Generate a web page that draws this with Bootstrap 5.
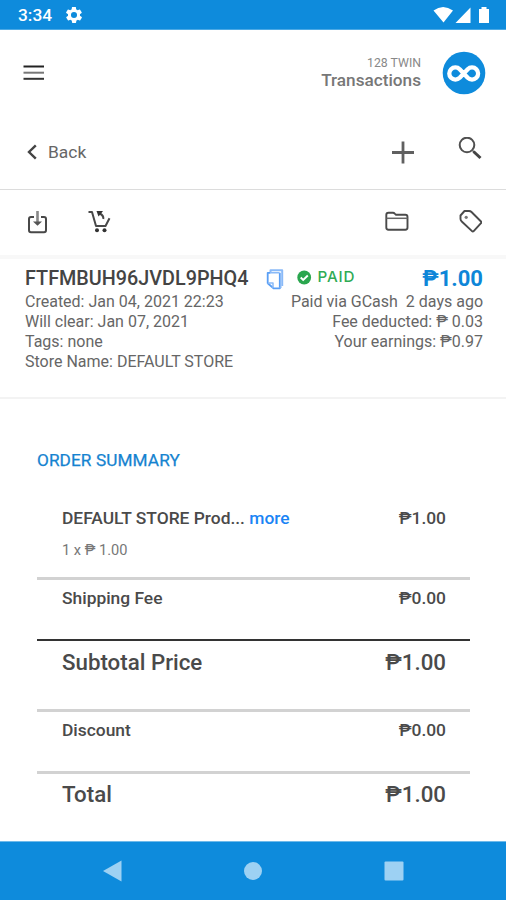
<!DOCTYPE html>
<html lang="en">
<head>
<meta charset="utf-8">
<meta name="viewport" content="width=device-width, initial-scale=1">
<title>Transactions</title>
<link href="https://cdn.jsdelivr.net/npm/bootstrap@5.3.0/dist/css/bootstrap.min.css" rel="stylesheet">
<style>
body{font-family:Roboto,"Liberation Sans",sans-serif;color:#666;background:#fff;height:900px;overflow:hidden;line-height:20px}
svg{display:block;flex:none}
.brand-bg{background:#0e8bdc}
.status{height:30px;padding:1px 15px 0 18px;color:#fff;font-size:17.3px;font-weight:500;border-bottom:1px solid #4ba9e5}
.gear{margin-left:14px}
.apphead{height:84px;padding:2px 20px 0 23px}
.store{font-size:12.3px;line-height:15px;color:#888}
.screen{font-size:17.2px;line-height:18px;color:#777;font-weight:500}
.titles{margin-bottom:2px}
.brandlogo{margin-left:21px}
.subbar{height:76px;padding:0 24px 0 27px;border-bottom:1px solid #dcdcdc}
.backlink{font-size:17.4px;color:#666;gap:11px}
.toolbar{height:65px;padding:0 24px 0 27px}
.detail{height:144px;padding:8px 23px 0 25px;border-top:4px solid #f8f8f8;border-bottom:2px solid #f3f3f3;font-size:16px;line-height:19.8px}
.headline{margin-bottom:1.4px}
.code{font-size:19.8px;line-height:24px;font-weight:500;color:#444}
.copy{margin-left:18px}
.check{margin:-4px 0 0 13px}
.paid{font-family:Inter,sans-serif;font-size:15.2px;line-height:20px;font-weight:500;color:#2fab54;letter-spacing:.9px;margin:-4px 0 0 5px}
.amount{font-size:22px;line-height:24px;font-weight:700;color:#0e86d8}
.summary{padding:51px 36px 0 37px;height:442px}
.summary h2{font-size:17.2px;line-height:20px;font-weight:400;color:#1583d0;-webkit-text-stroke:.25px #1583d0;margin:0;height:58px;letter-spacing:.1px}
.entry{height:62px;padding:8px 24px 0 25px;font-weight:500;font-size:17.4px;color:#4a4a4a}
.entry .more{color:#1a84f5}
.entry .qty{font-size:14.6px;font-weight:400;color:#777;margin-top:12px}
.entry.product{height:69px;padding-top:0}
.ruled{border-top:3px solid #d2d2d2}
.dark-rule{border-top:2px solid #333}
.entry.big{font-size:22.3px;height:70px;padding-top:11px}
.entry.big.ruled{padding-top:10px}
.navbtns{height:59px;border-top:1px solid #6fbaea;padding:0 102px 0 103px}
</style>
</head>
<body>
<header class="status brand-bg d-flex align-items-center">
  <span>3:34</span>
  <svg class="gear" width="16" height="16" viewBox="2 2 20 20" fill="#fff"><path d="M19.400 13c0-.3.1-.6.1-1s0-.7-.1-1l2.100-1.600c.2-.2.3-.4.1-.7l-2-3.400c-.1-.2-.4-.3-.6-.2l-2.500 1c-.5-.4-1.100-.7-1.700-1l-.4-2.600c0-.2-.2-.4-.5-.4h-4c-.2 0-.5.2-.5.4l-.4 2.600c-.6.3-1.200.6-1.700 1l-2.500-1c-.2-.1-.5 0-.6.2l-2 3.400c-.1.300-.1.500.1.700L4.600 11c-.1.300-.1.600-.1 1s0 .7.1 1l-2.100 1.600c-.2.2-.3.4-.1.7l2 3.400c.1.2.4.3.6.2l2.500-1c.5.4 1.100.7 1.700 1l.4 2.600c0 .2.200.4.500.4h4c.200 0 .500-.2.500-.4l.4-2.600c.6-.3 1.200-.6 1.700-1l2.500 1c.2.1.5 0 .6-.2l2-3.400c.1-.3.1-.5-.1-.7zM12 15.800A3.800 3.800 0 1 1 12 8.200a3.800 3.800 0 0 1 0 7.600z"/></svg>
  <svg class="ms-auto" width="58" height="18" viewBox="433 6 58 18" fill="#fff"><path d="M433.500 10.500Q443 3.500 453 10.500L443.500 22.500ZM455.500 23L470.500 7.500V23ZM479 9h2.500V7h5v2h2.500V23h-10Z"/></svg>
</header>
<section class="apphead d-flex align-items-center">
  <svg width="22" height="18" viewBox="0 0 22 18" stroke-width="2"><path stroke="#222" d="M.5 2.500H21"/><path stroke="#777" d="M.5 8.700H21"/><path stroke="#333" d="M.5 14.800H21"/></svg>
  <div class="titles ms-auto text-end"><div class="store">128 TWIN</div><div class="screen">Transactions</div></div>
  <svg class="brandlogo" width="44" height="44" viewBox="0 0 44 44"><circle cx="22" cy="22" r="21.300" fill="#0e8bdc"/><path d="M21.700 22.500L17.700 18.200A6.100 6.100 0 1 0 17.700 26.800L25.700 18.200A6.100 6.100 0 1 1 25.700 26.800Z" fill="none" stroke="#fff" stroke-width="4.300" stroke-linejoin="round"/></svg>
</section>
<nav class="subbar d-flex align-items-center">
  <div class="backlink d-flex align-items-center"><svg width="10" height="16" viewBox="0 0 10 16" fill="none" stroke="#444" stroke-width="2.400"><path d="M8.800 1.300L2 8l6.800 6.700"/></svg><span>Back</span></div>
  <svg class="ms-auto" width="99" height="30" viewBox="383 137 99 30" fill="none" stroke="#606060"><path stroke-width="2.800" d="M392 152.500h22M403 141.500v22"/><circle cx="467" cy="145" r="7.300" stroke="#505050" stroke-width="2"/><path stroke-width="1.500" d="M472 150l2 2"/><path stroke="#444" stroke-width="3" d="M473.500 151.500l7 6.500"/></svg>
</nav>
<nav class="toolbar d-flex align-items-center justify-content-between">
  <svg width="85" height="28" viewBox="27 208 85 28" fill="none" stroke="#484848" stroke-width="2" stroke-linejoin="round"><path d="M34 216h-3q-2 0-2 2v11q0 2.200 2 2.200h13q2 0 2-2.200v-11q0-2-2-2h-3"/><path stroke="#888" stroke-width="2.600" d="M37.500 210v12"/><path fill="#555" stroke="none" d="M33 220.500h9l-4.500 4.300z"/><path d="M88.500 211h3.500l4 14h9.500l4-7.800"/><circle cx="97" cy="229.300" r="2" fill="#333" stroke="none"/><circle cx="104.500" cy="229.300" r="2" fill="#333" stroke="none"/><path d="M103.300 218q.5-3.500-3.500-5.500"/><path fill="#333" stroke="none" d="M96.500 210h6.500l-1.500 2-3 3.500z"/></svg>
  <svg width="99" height="28" viewBox="383 208 99 28" fill="none" stroke="#4a4a4a" stroke-width="1.900" stroke-linejoin="round"><path d="M386.300 226.500V214q0-2.200 2.200-2.200h4.500q1 0 1.700.8l1.300 1.200h9.300q2.200 0 2.200 2.200v10.500q0 2.200-2.200 2.200h-16.800q-2.200 0-2.200-2.200z"/><path stroke="#666" stroke-width="1.500" d="M386.500 217.300h21"/><path d="M460.500 218v-3.500l4-4.500h4.500q1.500 0 2.500 1l9.500 9.500q.8.800 0 1.600l-7.300 8q-.9.900-1.700 0l-10-9.300q-1.500-1.300-1.500-2.800z"/><circle cx="466.200" cy="216.300" r="1.600" fill="#777" stroke="none"/></svg>
</nav>
<section class="detail">
  <div class="headline d-flex align-items-center">
    <span class="code">FTFMBUH96JVDL9PHQ4</span>
    <svg class="copy" width="18" height="23" viewBox="0 0 18 23" fill="none" stroke="#5a9ff5" stroke-linejoin="round"><path stroke="#8abaf8" stroke-width="2" d="M4.500 4V2.300h11.700V18"/><path stroke-width="1.800" d="M1.700 15.500V4.800h2.600M13.800 4.800v15.500H7.500l-5.800-5"/><path stroke="#8abaf8" stroke-width="1.500" d="M4 4.800h9.500M2 15h5v5M15.500 18.500l-1.700 1.800"/></svg>
    <svg class="check" width="15" height="15" viewBox="0 0 15 15"><circle cx="7.200" cy="7.500" r="6.900" fill="#2aa64e"/><path d="M3.700 7.500l2.500 2.500 4.600-4.500" fill="none" stroke="#fff" stroke-width="1.900"/></svg>
    <span class="paid">PAID</span>
    <span class="amount ms-auto">₱1.00</span>
  </div>
  <div class="d-flex justify-content-between">
    <div><div>Created: Jan 04, 2021 22:23</div><div>Will clear: Jan 07, 2021</div><div>Tags: none</div><div>Store Name: DEFAULT STORE</div></div>
    <div class="text-end"><div>Paid via GCash &nbsp;2 days ago</div><div>Fee deducted: ₱ 0.03</div><div>Your earnings: ₱0.97</div></div>
  </div>
</section>
<main class="summary">
  <h2>ORDER SUMMARY</h2>
  <div class="entry product"><div class="d-flex justify-content-between"><span>DEFAULT STORE Prod... <span class="more">more</span></span><span>₱1.00</span></div><div class="qty">1 x ₱ 1.00</div></div>
  <div class="entry ruled d-flex justify-content-between"><span>Shipping Fee</span><span>₱0.00</span></div>
  <div class="entry dark-rule big d-flex justify-content-between"><span>Subtotal Price</span><span>₱1.00</span></div>
  <div class="entry ruled d-flex justify-content-between"><span>Discount</span><span>₱0.00</span></div>
  <div class="entry ruled big d-flex justify-content-between"><span>Total</span><span>₱1.00</span></div>
</main>
<footer class="navbtns brand-bg d-flex align-items-center justify-content-between">
  <svg width="19" height="22" viewBox="0 0 19 22" fill="#9dd1f3"><path d="M0 11L18.500 .5V21.500Z"/></svg>
  <svg width="18" height="18" viewBox="0 0 18 18" fill="#9dd1f3"><circle cx="9" cy="9" r="9"/></svg>
  <svg width="20" height="20" viewBox="0 0 20 20" fill="#9dd1f3"><rect x=".5" y=".5" width="19" height="19" rx="1"/></svg>
</footer>
<script src="https://cdn.jsdelivr.net/npm/bootstrap@5.3.0/dist/js/bootstrap.bundle.min.js"></script>
</body>
</html>
